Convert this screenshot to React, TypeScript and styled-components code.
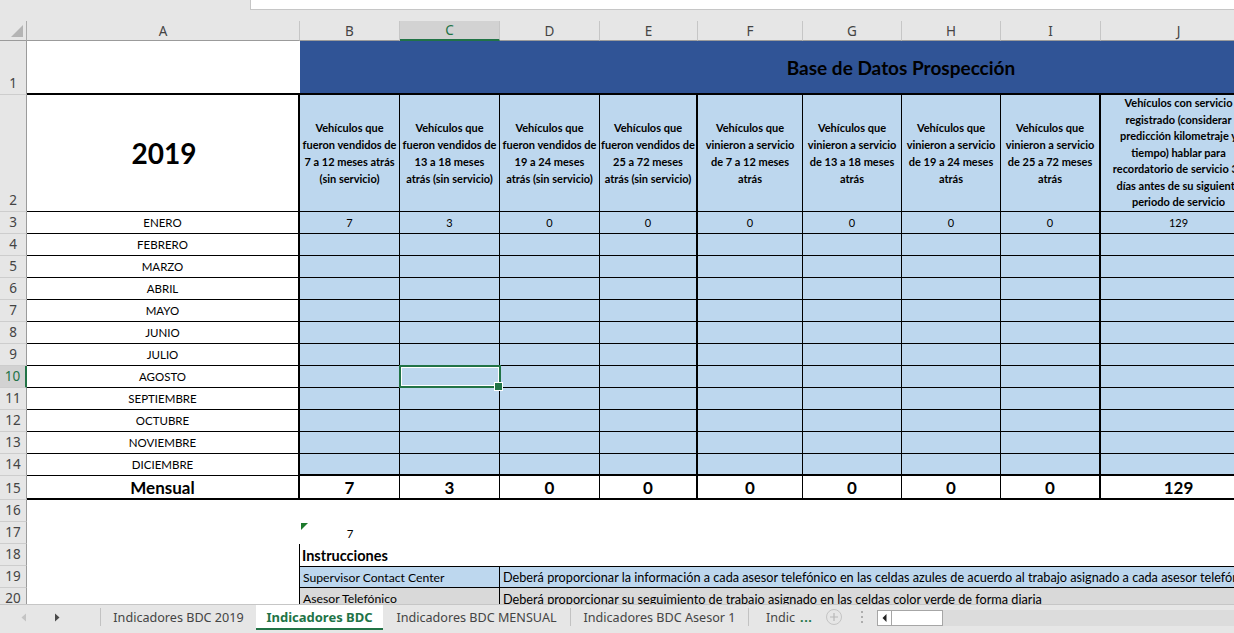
import React from 'react';
import styled, { createGlobalStyle, css } from 'styled-components';

const NAVY = '#305496';
const LIGHT_BLUE = '#bdd7ee';
const GRAY_CELL = '#d9d9d9';
const CHROME = '#e6e6e6';
const GREEN = '#217346';
const CELL_FONT = 'Lato, "Liberation Sans", sans-serif';
const UI_FONT = '"Noto Sans", "Open Sans", sans-serif';

const COL_WIDTHS = [27, 273, 100, 100, 100, 98, 105, 99, 99, 100, 156, 100, 145];
const COL_LETTERS = ['A', 'B', 'C', 'D', 'E', 'F', 'G', 'H', 'I', 'J', 'K', 'L'];

const HEADERS: string[][] = [
  ['Vehículos que', 'fueron vendidos de', '7 a 12 meses atrás', '(sin servicio)'],
  ['Vehículos que', 'fueron vendidos de', '13 a 18 meses', 'atrás (sin servicio)'],
  ['Vehículos que', 'fueron vendidos de', '19 a 24 meses', 'atrás (sin servicio)'],
  ['Vehículos que', 'fueron vendidos de', '25 a 72 meses', 'atrás (sin servicio)'],
  ['Vehículos que', 'vinieron a servicio', 'de 7 a 12 meses', 'atrás'],
  ['Vehículos que', 'vinieron a servicio', 'de 13 a 18 meses', 'atrás'],
  ['Vehículos que', 'vinieron a servicio', 'de 19 a 24 meses', 'atrás'],
  ['Vehículos que', 'vinieron a servicio', 'de 25 a 72 meses', 'atrás'],
  [
    'Vehículos con servicio',
    'registrado (considerar',
    'predicción kilometraje y',
    'tiempo) hablar para',
    'recordatorio de servicio 30',
    'días antes de su siguiente',
    'periodo de servicio',
  ],
];

const FIRST_MONTH = [7, 3, 0, 0, 0, 0, 0, 0, 129];
const TOTALS = [7, 3, 0, 0, 0, 0, 0, 0, 129];
const MONTHS = [
  'ENERO', 'FEBRERO', 'MARZO', 'ABRIL', 'MAYO', 'JUNIO',
  'JULIO', 'AGOSTO', 'SEPTIEMBRE', 'OCTUBRE', 'NOVIEMBRE', 'DICIEMBRE',
];

const rightEdge = (j: number) => (j === 3 || j === 7 ? 2 : 1);

const GlobalStyle = createGlobalStyle`
  html, body { margin: 0; padding: 0; width: 1234px; height: 633px; overflow: hidden; background: #fff; }
  #root { width: 1234px; height: 633px; }
  * { box-sizing: border-box; }
`;

const Window = styled.div`
  width: 1234px;
  height: 633px;
  display: flex;
  flex-direction: column;
  overflow: hidden;
  background: #fff;
`;

const TopStrip = styled.div`
  flex: none;
  height: 21px;
  display: flex;
  align-items: flex-start;
  background: ${CHROME};
`;

const FormulaBox = styled.div`
  margin-left: 250px;
  flex: 1;
  height: 10px;
  background: #fff;
  border-left: 1px solid #c6c6c6;
  border-bottom: 1px solid #c6c6c6;
`;

const SheetViewport = styled.div`
  flex: 1;
  min-height: 0;
  overflow: hidden;
`;

const SheetGrid = styled.div`
  display: grid;
  width: max-content;
  grid-template-columns: ${COL_WIDTHS.map((w) => `${w}px`).join(' ')};
  grid-template-rows: 20px 54px 117px repeat(12, 22px) 24px repeat(5, 22px);
`;

const Corner = styled.div`
  background: ${CHROME};
  border-right: 1px solid #ababab;
  border-bottom: 1px solid #9b9b9b;
  display: flex;
  align-items: flex-end;
  justify-content: flex-end;
  padding: 0 2px 2px 0;
`;

const ColHead = styled.div<{ $active?: boolean }>`
  background: ${(p) => (p.$active ? '#d2d2d2' : CHROME)};
  border-right: 1px solid #c6c6c6;
  border-bottom: ${(p) => (p.$active ? `2px solid ${GREEN}` : '1px solid #9b9b9b')};
  display: flex;
  align-items: center;
  justify-content: center;
  font: 13.5px ${UI_FONT};
  color: ${(p) => (p.$active ? GREEN : '#444')};
`;

const RowHead = styled.div<{ $active?: boolean }>`
  grid-column: 1;
  background: ${(p) => (p.$active ? '#d2d2d2' : CHROME)};
  border-bottom: 1px solid #cdcdcd;
  border-right: ${(p) => (p.$active ? `2px solid ${GREEN}` : '1px solid #9b9b9b')};
  display: flex;
  align-items: flex-end;
  justify-content: center;
  font: 13.5px ${UI_FONT};
  line-height: 21px;
  color: ${(p) => (p.$active ? GREEN : '#444')};
`;

type CellProps = { $r?: number; $b?: number; $t?: number; $bg?: string };

const Cell = styled.div<CellProps>`
  position: relative;
  min-width: 0;
  display: flex;
  align-items: center;
  justify-content: center;
  background: ${(p) => p.$bg || 'transparent'};
  border-right: ${(p) => (p.$r ? `${p.$r}px solid #000` : '0')};
  border-bottom: ${(p) => (p.$b ? `${p.$b}px solid #000` : '0')};
  border-top: ${(p) => (p.$t ? `${p.$t}px solid #000` : '0')};
  font-family: ${CELL_FONT};
  font-size: 12px;
  color: #000;
  white-space: nowrap;
`;

const Banner = styled(Cell)`
  grid-column: 3 / -1;
  background: ${NAVY};
  border-bottom: 2px solid #000;
  font-size: 19px;
  font-weight: 700;
  color: #000;
`;

const YearCell = styled(Cell)`
  font-size: 28px;
  font-weight: 700;
  padding-left: 3px;
`;

const HeaderCell = styled(Cell)<{ $dense?: boolean }>`
  flex-direction: column;
  overflow: hidden;
  background: ${LIGHT_BLUE};
  font-size: 11px;
  font-weight: 700;
  line-height: ${(p) => (p.$dense ? '16.6px' : '17px')};
`;

const HeaderLine = styled.span`
  display: block;
  text-align: center;
`;

const MonthCell = styled(Cell)`
  font-size: 11.5px;
`;

const DataCell = styled(Cell)<{ $selected?: boolean }>`
  background: ${LIGHT_BLUE};
  font-size: 11px;
  ${(p) =>
    p.$selected &&
    css`
      z-index: 2;
      &::after {
        content: '';
        position: absolute;
        left: -1px;
        top: -1px;
        right: -2px;
        bottom: -1px;
        border: 2px solid ${GREEN};
        box-shadow: inset 0 0 0 1px #fff;
      }
      &::before {
        content: '';
        position: absolute;
        right: -4px;
        bottom: -4px;
        width: 7px;
        height: 7px;
        background: ${GREEN};
        border: 1px solid #fff;
        z-index: 3;
      }
    `}
`;

const TotalLabel = styled(Cell)`
  font-size: 17px;
  font-weight: 700;
`;

const TotalCell = styled(Cell)`
  font-size: 17px;
  font-weight: 700;
`;

const NoteCell = styled(Cell)`
  font-size: 11.5px;
`;

const ErrorMark = styled.span`
  position: absolute;
  left: 1px;
  top: 1px;
  width: 0;
  height: 0;
  border-top: 7px solid #1d7a2c;
  border-right: 7px solid transparent;
`;

const InstrTitle = styled(Cell)`
  justify-content: flex-start;
  padding-left: 2px;
  font-size: 14.5px;
  font-weight: 700;
`;

const InstrLabel = styled(Cell)<{ $tone: 'blue' | 'gray' }>`
  grid-column: span 2;
  justify-content: flex-start;
  padding-left: 3px;
  background: ${(p) => (p.$tone === 'blue' ? LIGHT_BLUE : GRAY_CELL)};
  font-size: 12.2px;
`;

const InstrText = styled(Cell)<{ $tone: 'blue' | 'gray' }>`
  grid-column: 5 / -1;
  justify-content: flex-start;
  padding-left: 3px;
  overflow: hidden;
  background: ${(p) => (p.$tone === 'blue' ? LIGHT_BLUE : GRAY_CELL)};
  font-size: 12.7px;
`;

/* ---------- sheet tab bar ---------- */

const TabBar = styled.div`
  flex: none;
  height: 29px;
  display: flex;
  align-items: flex-start;
  background: ${CHROME};
  border-top: 1px solid #c6c6c6;
  font-family: ${UI_FONT};
  font-size: 12.6px;
  color: #444;
`;

const NavArea = styled.div`
  width: 100px;
  height: 24px;
  display: flex;
  align-items: center;
  gap: 27px;
  padding-left: 21px;
`;

const Separator = styled.div`
  flex: none;
  width: 1px;
  height: 18px;
  margin-top: 3px;
  background: #c2c2c2;
`;

const Tab = styled.div<{ $w: number; $active?: boolean }>`
  flex: none;
  width: ${(p) => p.$w}px;
  height: 25px;
  display: flex;
  align-items: center;
  justify-content: center;
  white-space: nowrap;
  ${(p) =>
    p.$active &&
    css`
      background: #fff;
      color: ${GREEN};
      font-weight: 700;
      font-size: 13px;
      border-bottom: 2px solid ${GREEN};
    `}
`;

const TruncTab = styled.div`
  flex: none;
  width: 72px;
  height: 24px;
  display: flex;
  align-items: center;
  padding-left: 17px;
  gap: 5px;
  white-space: nowrap;
`;

const Ellipsis = styled.span`
  color: ${GREEN};
  font-weight: 700;
  letter-spacing: 0.5px;
`;

const IconSlot = styled.div<{ $w: number }>`
  flex: none;
  width: ${(p) => p.$w}px;
  height: 24px;
  display: flex;
  align-items: center;
  justify-content: center;
`;

const HScroll = styled.div`
  flex: 1;
  height: 16px;
  margin-top: 5px;
  display: flex;
  background: #dcdcdc;
`;

const ScrollArrow = styled.div`
  width: 15px;
  height: 16px;
  background: #fff;
  border: 1px solid #a6a6a6;
  display: flex;
  align-items: center;
  justify-content: center;
`;

const ScrollThumb = styled.div`
  width: 51px;
  height: 16px;
  background: #fff;
  border: 1px solid #a6a6a6;
  border-left: 0;
`;

export default function App() {
  return (
    <Window>
      <GlobalStyle />
      <TopStrip>
        <FormulaBox />
      </TopStrip>

      <SheetViewport>
        <SheetGrid>
          <Corner>
            <svg width="14" height="14" viewBox="0 0 14 14">
              <polygon points="13,1 13,13 1,13" fill="#b4b4b4" />
            </svg>
          </Corner>
          {COL_LETTERS.map((l) => (
            <ColHead key={l} $active={l === 'C'}>
              {l}
            </ColHead>
          ))}

          {/* row 1 */}
          <RowHead>1</RowHead>
          <Cell $b={2} />
          <Banner>Base de Datos Prospección</Banner>

          {/* row 2 */}
          <RowHead>2</RowHead>
          <YearCell $r={2} $b={1}>2019</YearCell>
          {HEADERS.map((lines, j) => (
            <HeaderCell key={j} $r={rightEdge(j)} $b={1} $dense={lines.length > 4}>
              {lines.map((line) => (
                <HeaderLine key={line}>{line}</HeaderLine>
              ))}
            </HeaderCell>
          ))}

          {/* rows 3 - 14 */}
          {MONTHS.map((m, mi) => (
            <React.Fragment key={m}>
              <RowHead $active={mi === 7}>{mi + 3}</RowHead>
              <MonthCell $r={2} $b={1}>{m}</MonthCell>
              {FIRST_MONTH.map((v, j) => (
                <DataCell
                  key={j}
                  $r={rightEdge(j)}
                  $b={mi === 11 ? 2 : 1}
                  $selected={mi === 7 && j === 1}
                >
                  {mi === 0 ? v : ''}
                </DataCell>
              ))}
            </React.Fragment>
          ))}

          {/* row 15 */}
          <RowHead>15</RowHead>
          <TotalLabel $r={2} $b={2}>Mensual</TotalLabel>
          {TOTALS.map((v, j) => (
            <TotalCell key={j} $r={rightEdge(j)} $b={2}>
              {v}
            </TotalCell>
          ))}

          {/* row 16 */}
          <RowHead>16</RowHead>

          {/* row 17 */}
          <RowHead>17</RowHead>
          <Cell />
          <NoteCell>
            <ErrorMark />7
          </NoteCell>

          {/* row 18 */}
          <RowHead>18</RowHead>
          <Cell $r={1} />
          <InstrTitle>Instrucciones</InstrTitle>

          {/* row 19 */}
          <RowHead>19</RowHead>
          <Cell $r={1} />
          <InstrLabel $tone="blue" $t={1} $b={1} $r={1}>
            Supervisor Contact Center
          </InstrLabel>
          <InstrText $tone="blue" $t={1} $b={1}>
            Deberá proporcionar la información a cada asesor telefónico en las celdas azules de acuerdo al trabajo
            asignado a cada asesor telefónico
          </InstrText>

          {/* row 20 */}
          <RowHead>20</RowHead>
          <Cell $r={1} />
          <InstrLabel $tone="gray" $b={1} $r={1}>
            Asesor Telefónico
          </InstrLabel>
          <InstrText $tone="gray" $b={1}>
            Deberá proporcionar su seguimiento de trabajo asignado en las celdas color verde de forma diaria
          </InstrText>
        </SheetGrid>
      </SheetViewport>

      <TabBar>
        <NavArea>
          <svg width="6" height="9" viewBox="0 0 6 9">
            <polygon points="5,0.5 5,8.5 0.5,4.5" fill="#c4c4c4" />
          </svg>
          <svg width="6" height="9" viewBox="0 0 6 9">
            <polygon points="1,0.5 1,8.5 5.5,4.5" fill="#4a4a4a" />
          </svg>
        </NavArea>
        <Separator />
        <Tab $w={155}>Indicadores BDC 2019</Tab>
        <Tab $w={127} $active>
          Indicadores BDC
        </Tab>
        <Tab $w={187}>Indicadores BDC MENSUAL</Tab>
        <Separator />
        <Tab $w={177}>Indicadores BDC Asesor 1</Tab>
        <Separator />
        <TruncTab>
          Indic <Ellipsis>...</Ellipsis>
        </TruncTab>
        <IconSlot $w={26}>
          <svg width="18" height="18" viewBox="0 0 18 18">
            <circle cx="9" cy="9" r="7.5" fill="none" stroke="#c4c4c4" strokeWidth="1" />
            <path d="M9 5 V13 M5 9 H13" stroke="#b8b8b8" strokeWidth="1.2" />
          </svg>
        </IconSlot>
        <IconSlot $w={30}>
          <svg width="4" height="14" viewBox="0 0 4 14">
            <circle cx="2" cy="2" r="1" fill="#9a9a9a" />
            <circle cx="2" cy="7" r="1" fill="#9a9a9a" />
            <circle cx="2" cy="12" r="1" fill="#9a9a9a" />
          </svg>
        </IconSlot>
        <HScroll>
          <ScrollArrow>
            <svg width="5" height="8" viewBox="0 0 5 8">
              <polygon points="4.5,0 4.5,8 0.5,4" fill="#222" />
            </svg>
          </ScrollArrow>
          <ScrollThumb />
        </HScroll>
      </TabBar>
    </Window>
  );
}
